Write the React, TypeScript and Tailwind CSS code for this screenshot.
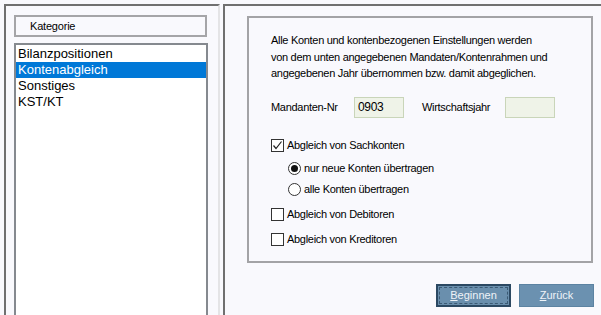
import React from 'react'

const font = { fontFamily: '"Liberation Sans", Arial, sans-serif' }

function CheckBox({ checked, label }: { checked?: boolean; label: string }) {
  return (
    <div className="flex h-[20px] items-center">
      <div className="flex h-[13px] w-[13px] items-center justify-center border border-[#333333] bg-white">
        {checked && (
          <svg width="11" height="11" viewBox="0 0 11 11">
            <path d="M1.5 5.5 L4 8.5 L9.5 1.5" fill="none" stroke="#222" strokeWidth="1.2" />
          </svg>
        )}
      </div>
      <span className="ml-[3px]">{label}</span>
    </div>
  )
}

function Radio({ checked, label }: { checked?: boolean; label: string }) {
  return (
    <div className="flex h-[20px] items-center">
      <div className="flex h-[13px] w-[13px] items-center justify-center rounded-full border border-[#333333] bg-white">
        {checked && <div className="h-[7px] w-[7px] rounded-full bg-[#111]" />}
      </div>
      <span className="ml-[3px]">{label}</span>
    </div>
  )
}

export default function App() {
  const items = ['Bilanzpositionen', 'Kontenabgleich', 'Sonstiges', 'KST/KT']
  const selected = 1

  return (
    <div
      className="flex h-[315px] w-[601px] overflow-hidden bg-[#f9f9fd] pl-[4px] pt-[4px] text-black"
      style={font}
    >
      {/* Kategorie-Liste */}
      <div className="flex h-[320px] w-[216px] flex-col border-l-2 border-t-2 border-r-2 border-l-[#707070] border-t-[#707070] border-r-[#e4e4e6]">
        <div className="ml-[8px] mt-[9px] flex h-[22px] w-[193px] items-center border-2 border-[#a5a5a8] pl-[14px] text-[11px] tracking-[-0.2px]">
          Kategorie
        </div>
        <div className="ml-[8px] mt-[6px] w-[194px] flex-1 border-2 border-[#85898f] bg-white pt-[1px] text-[13px]">
          {items.map((item, i) => (
            <div
              key={item}
              className={
                i === selected
                  ? 'h-[16px] bg-[#0078d7] pl-[2px] leading-[16px] text-white'
                  : 'h-[16px] pl-[2px] leading-[16px]'
              }
            >
              {item}
            </div>
          ))}
        </div>
      </div>

      {/* Einstellungen */}
      <div className="ml-[3px] flex h-[320px] flex-1 flex-col border-l-2 border-t-2 border-[#707070] text-[11px] tracking-[-0.3px]">
        <div className="ml-[22px] mt-[10px] h-[247px] w-[346px] border-2 border-[#a3a3a6] pl-[22px] pt-[14px]">
          <div className="leading-[16.5px]">
            <div>Alle Konten und kontenbezogenen Einstellungen werden</div>
            <div>von dem unten angegebenen Mandaten/Kontenrahmen und</div>
            <div>angegebenen Jahr übernommen bzw. damit abgeglichen.</div>
          </div>

          <div className="mt-[15px] flex h-[21px] items-center">
            <span className="w-[83px]">Mandanten-Nr</span>
            <div className="flex h-[21px] w-[50px] items-center border border-[#c9d5b9] bg-[#eff3e8] pl-[3px] text-[12px]">
              0903
            </div>
            <span className="ml-[18px] w-[83px]">Wirtschaftsjahr</span>
            <div className="h-[21px] w-[50px] border border-[#c9d5b9] bg-[#eff3e8]" />
          </div>

          <div className="mt-[18px]">
            <CheckBox checked label="Abgleich von Sachkonten" />
          </div>
          <div className="ml-[17px] mt-[3px]">
            <Radio checked label="nur neue Konten übertragen" />
          </div>
          <div className="ml-[17px] mt-[1px]">
            <Radio label="alle Konten übertragen" />
          </div>
          <div className="mt-[5px]">
            <CheckBox label="Abgleich von Debitoren" />
          </div>
          <div className="mt-[5px]">
            <CheckBox label="Abgleich von Kreditoren" />
          </div>
        </div>

        <div className="ml-[22px] mt-[21px] flex w-[347px] justify-end gap-[8px] tracking-normal">
          <button className="flex h-[23px] w-[75px] items-center justify-center border-2 border-[#2b4862] bg-[#6a8fad] p-[1px] text-[11px] text-[#eef3f8]">
            <span className="flex h-full w-full items-center justify-center border border-dashed border-[#3b5a74]">
              <span className="underline">B</span>eginnen
            </span>
          </button>
          <button className="flex h-[23px] w-[75px] items-center justify-center border border-[#5c83a2] bg-[#6b91b0] text-[11px] text-[#eef3f8]">
            <span className="underline">Z</span>urück
          </button>
        </div>
      </div>
    </div>
  )
}
